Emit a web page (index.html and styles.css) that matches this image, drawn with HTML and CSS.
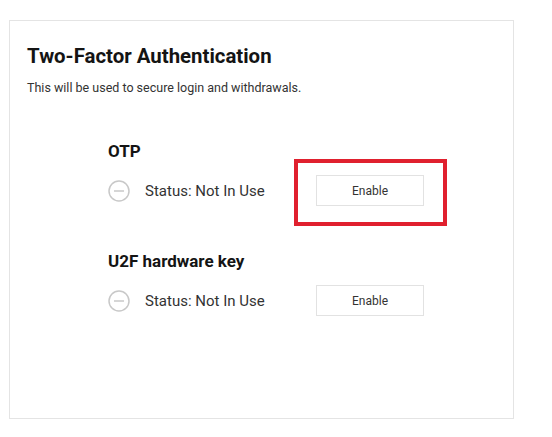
FILE: index.html
```html
<!DOCTYPE html>
<html>
<head>
<meta charset="utf-8">
<link rel="stylesheet" href="styles.css">
</head>
<body>
<div class="card">
  <h1 class="title">Two-Factor Authentication</h1>
  <p class="subtitle">This will be used to secure login and withdrawals.</p>
  <div class="methods">
    <section class="method">
      <h2 class="method-name">OTP</h2>
      <div class="row">
        <div class="status">
          <svg class="status-icon" width="22" height="22" viewBox="0 0 22 22"><circle cx="11" cy="11" r="10" fill="none" stroke="#c8c8c8" stroke-width="1.5"/><line x1="6" y1="11" x2="16" y2="11" stroke="#c8c8c8" stroke-width="1.5"/></svg>
          <span class="status-text">Status: Not In Use</span>
        </div>
        <div class="action">
          <button class="btn">Enable</button>
          <div class="highlight"></div>
        </div>
      </div>
    </section>
    <section class="method">
      <h2 class="method-name">U2F hardware key</h2>
      <div class="row">
        <div class="status">
          <svg class="status-icon" width="22" height="22" viewBox="0 0 22 22"><circle cx="11" cy="11" r="10" fill="none" stroke="#c8c8c8" stroke-width="1.5"/><line x1="6" y1="11" x2="16" y2="11" stroke="#c8c8c8" stroke-width="1.5"/></svg>
          <span class="status-text">Status: Not In Use</span>
        </div>
        <div class="action">
          <button class="btn">Enable</button>
        </div>
      </div>
    </section>
  </div>
</div>
</body>
</html>
```
FILE: styles.css
```css
html, body {
  margin: 0;
  padding: 0;
  background: #ffffff;
  font-family: Roboto, "Liberation Sans", sans-serif;
}
.card {
  box-sizing: border-box;
  margin: 20px 0 0 9px;
  width: 505px;
  height: 399px;
  border: 1px solid #e4e4e4;
  padding: 0 0 0 17px;
}
.title {
  margin: 23px 0 0 0;
  font-size: 20.4px;
  line-height: 24px;
  font-weight: 700;
  color: #141414;
}
.subtitle {
  margin: 12px 0 0 0;
  font-size: 12.5px;
  line-height: 15px;
  color: #333333;
}
.methods {
  padding-left: 81px;
  margin-top: 46px;
}
.method-name {
  margin: 0;
  font-size: 17px;
  line-height: 20px;
  font-weight: 700;
  color: #141414;
}
.method + .method {
  margin-top: 45px;
}
.row {
  display: flex;
  align-items: center;
  margin-top: 14px;
}
.status {
  display: flex;
  align-items: center;
  width: 208px;
}
.status-icon {
  flex: none;
}
.status-text {
  margin-left: 15px;
  font-size: 15px;
  color: #333333;
}
.action {
  position: relative;
}
.highlight {
  position: absolute;
  top: -16px;
  left: -22px;
  right: -23px;
  bottom: -20px;
  border: 4px solid #e0202e;
}
.btn {
  display: block;
  box-sizing: border-box;
  width: 108px;
  height: 31px;
  background: #ffffff;
  border: 1px solid #e2e2e2;
  font-family: Roboto, "Liberation Sans", sans-serif;
  font-size: 12px;
  color: #333333;
  padding: 0;
}
```
